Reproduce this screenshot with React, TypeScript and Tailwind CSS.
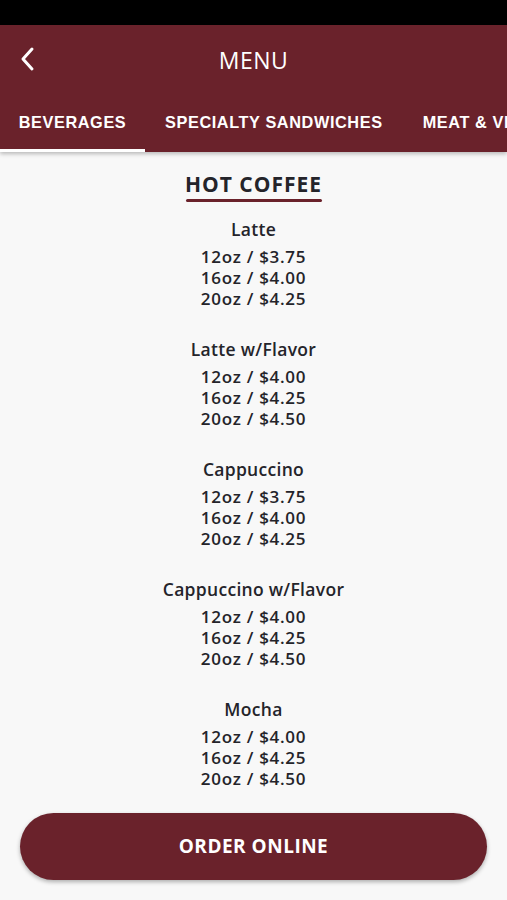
import React from 'react';

type Item = { name: string; prices: string[] };

const items: Item[] = [
  { name: 'Latte', prices: ['12oz / $3.75', '16oz / $4.00', '20oz / $4.25'] },
  { name: 'Latte w/Flavor', prices: ['12oz / $4.00', '16oz / $4.25', '20oz / $4.50'] },
  { name: 'Cappuccino', prices: ['12oz / $3.75', '16oz / $4.00', '20oz / $4.25'] },
  { name: 'Cappuccino w/Flavor', prices: ['12oz / $4.00', '16oz / $4.25', '20oz / $4.50'] },
  { name: 'Mocha', prices: ['12oz / $4.00', '16oz / $4.25', '20oz / $4.50'] },
];

const tabs = ['BEVERAGES', 'SPECIALTY SANDWICHES', 'MEAT & VEGGIE'];

export default function App() {
  return (
    <div className="relative w-[507px] h-[900px] bg-[#f8f8f8] flex flex-col overflow-hidden font-['Open_Sans',sans-serif]">
      <div className="h-[25px] bg-black shrink-0" />

      <header className="bg-[#6a222b] text-white shrink-0 shadow-[0_2px_4px_rgba(0,0,0,0.25)] z-10">
        <div className="h-[70px] flex items-center relative">
          <button className="absolute left-[18px] top-[21px] text-white" aria-label="Back">
            <svg width="20" height="26" viewBox="0 0 20 26" fill="none">
              <path d="M14 3 L5 13 L14 23" stroke="white" strokeWidth="3" strokeLinecap="round" strokeLinejoin="round" />
            </svg>
          </button>
          <h1 className="w-full text-center text-[23px] font-medium tracking-[0.5px] mt-[1px]">
            MENU
          </h1>
        </div>
        <nav className="flex h-[57px] whitespace-nowrap overflow-hidden">
          {tabs.map((t, i) => (
            <div
              key={t}
              className={`relative flex items-center pb-[3px] shrink-0 ${i === 0 ? 'w-[145px] justify-center' : 'px-[20px]'}`}
            >
              <span className="text-[16.3px] font-bold font-['Liberation_Sans',sans-serif] tracking-[0.6px]">{t}</span>
              {i === 0 && <div className="absolute left-0 right-0 bottom-0 h-[3px] bg-white" />}
            </div>
          ))}
        </nav>
      </header>

      <main className="flex-1 overflow-hidden flex flex-col items-center text-[#24242a] pt-[19px]">
        <h2 className="shrink-0 text-[21px] font-bold tracking-[1px] leading-[26px]">HOT COFFEE</h2>
        <div className="shrink-0 w-[136px] h-[3px] bg-[#6a222b] mt-[2px] rounded-full" />

        <div className="shrink-0 flex flex-col items-center mt-[16px]">
          {items.map((it) => (
            <div key={it.name} className="shrink-0 flex flex-col items-center h-[120px]">
              <div className="text-[17.5px] font-semibold leading-[22px] tracking-[0.3px] mb-[6px]">{it.name}</div>
              {it.prices.map((p) => (
                <div key={p} className="text-[17px] font-semibold leading-[21px] tracking-[0.7px]">{p}</div>
              ))}
            </div>
          ))}
        </div>
      </main>

      <div className="absolute left-[20px] top-[813px] w-[467px]">
        <button className="w-full h-[67px] rounded-full bg-[#6a222b] text-white text-[19px] font-bold tracking-[0.5px] shadow-[0_2px_4px_rgba(0,0,0,0.3)]">
          ORDER ONLINE
        </button>
      </div>
    </div>
  );
}
